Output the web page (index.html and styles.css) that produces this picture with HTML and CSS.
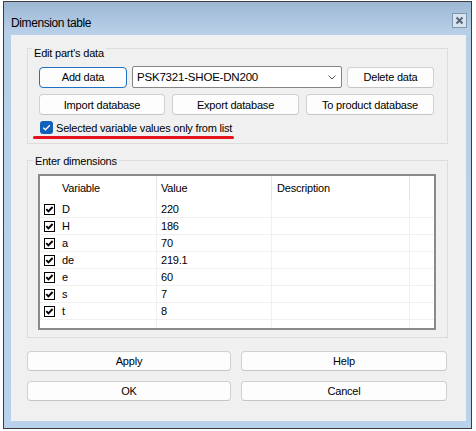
FILE: index.html
```html
<!DOCTYPE html>
<html lang="en">
<head>
    <meta charset="UTF-8">
    <title>Dimension table</title>
    <link rel="stylesheet" href="styles.css">
</head>
<body>
    <div class="window">
        <div class="titlebar">
            <span class="title">Dimension table</span>
            <span class="close-btn">
                <svg width="9" height="9" viewBox="0 0 9 9"><path d="M1.5 1.5 L7.5 7.5 M7.5 1.5 L1.5 7.5" stroke="#56667a" stroke-width="2"/></svg>
            </span>
        </div>
        <div class="client">
            <div class="group group-edit">
                <div class="group-title">Edit part's data</div>
                <div class="btn-row row-top">
                    <button class="btn btn-default w-add">Add data</button>
                    <div class="combo">
                        <span>PSK7321-SHOE-DN200</span>
                        <svg width="8" height="5" viewBox="0 0 8 5"><path d="M0.5 0.5 L4 4 L7.5 0.5" fill="none" stroke="#5a5a5a" stroke-width="1"/></svg>
                    </div>
                    <button class="btn w-delete">Delete data</button>
                </div>
                <div class="btn-row row-db">
                    <button class="btn w-import">Import database</button>
                    <button class="btn w-export">Export database</button>
                    <button class="btn w-product">To product database</button>
                </div>
                <label class="check-line">
                    <span class="check-box">
                        <svg width="13" height="13" viewBox="0 0 13 13"><path d="M3.2 6.6 L5.4 8.8 L9.8 4.2" fill="none" stroke="#fff" stroke-width="1.3"/></svg>
                    </span>
                    Selected variable values only from list
                </label>
                <div class="red-mark"></div>
            </div>

            <div class="group group-dims">
                <div class="group-title">Enter dimensions</div>
                <div class="list-view">
                    <table class="dims">
                        <colgroup>
                            <col class="c-var"><col class="c-val"><col class="c-desc"><col class="c-rest">
                        </colgroup>
                        <thead>
                            <tr><th class="h-var">Variable</th><th>Value</th><th class="h-desc">Description</th><th class="h-rest"></th></tr>
                        </thead>
                        <tbody id="rows"></tbody>
                    </table>
                </div>
            </div>

            <div class="dialog-buttons">
                <button class="btn">Apply</button>
                <button class="btn">Help</button>
                <button class="btn">OK</button>
                <button class="btn">Cancel</button>
            </div>
        </div>
    </div>

    <script>
        const dims = [
            ['D', '220'],
            ['H', '186'],
            ['a', '70'],
            ['de', '219.1'],
            ['e', '60'],
            ['s', '7'],
            ['t', '8']
        ];

        const tick = '<svg class="row-check" width="11" height="11" viewBox="0 0 11 11">' +
            '<rect x="0.5" y="0.5" width="10" height="10" fill="#fff" stroke="#000"/>' +
            '<path d="M2.3 5.2 L4.4 7.4 L8.6 3" fill="none" stroke="#000" stroke-width="1.9"/></svg>';

        const body = document.getElementById('rows');
        dims.forEach(([name, value]) => {
            const tr = document.createElement('tr');
            tr.innerHTML = `<td class="d-var">${tick}${name}</td><td class="d-val">${value}</td><td></td><td></td>`;
            body.appendChild(tr);
        });

        // empty space under the last row keeps the grid lines
        const filler = document.createElement('tr');
        filler.className = 'filler';
        filler.innerHTML = '<td></td><td></td><td></td><td></td>';
        body.appendChild(filler);
    </script>
</body>
</html>
```

FILE: styles.css
```css
body {
    margin: 0;
    background: #fff;
    font-family: "Liberation Sans", Arial, sans-serif;
    font-size: 11px;
    letter-spacing: -0.2px;
    color: #000;
}

.window {
    width: 469px;
    height: 428px;
    margin: 1px 0 0 3px;
    box-sizing: border-box;
    border: 1px solid #3c3c3c;
    background: linear-gradient(#9db7d4 0, #b8cfe8 30px, #b9d1ea 100%);
}

.titlebar {
    height: 33px;
    display: flex;
    justify-content: space-between;
    align-items: flex-start;
    padding: 0 4px 0 7px;
}
.title {
    margin-top: 14px;
    font-size: 12px;
    line-height: 14px;
    letter-spacing: -0.4px;
}
.close-btn {
    margin-top: 11px;
    width: 15px;
    height: 15px;
    box-sizing: border-box;
    border: 1px solid #8195ac;
    background: #d9e4f1;
    display: flex;
    align-items: center;
    justify-content: center;
}

.client {
    margin: 0 5px 0 7px;
    height: 386px;
    box-sizing: border-box;
    padding: 13px 0 0 16px;
    background: #f0f0f0;
}

.group {
    width: 421px;
    box-sizing: border-box;
    border: 1px solid #dcdcdc;
}
.group-title {
    width: fit-content;
    padding: 0 2px;
    line-height: 13px;
    background: #f0f0f0;
}

.group-edit {
    padding: 0 13px 4px 11px;
}
.group-edit .group-title {
    margin: -2px 0 0 -7px;
}

.btn-row {
    display: flex;
    align-items: center;
}
.row-top {
    margin-top: 6px;
    height: 22px;
    gap: 5px;
}
.row-db {
    margin-top: 6px;
    height: 21px;
    gap: 7px;
}

.btn {
    height: 21px;
    padding: 0;
    box-sizing: border-box;
    border: 1px solid #d0d0d0;
    border-bottom-color: #c4c4c4;
    border-radius: 4px;
    background: #fdfdfd;
    font: inherit;
    letter-spacing: inherit;
    color: #000;
}
.btn-default {
    border-color: #1f6fc5;
}
.w-add { width: 88px; }
.w-delete { width: 87px; }
.w-import { width: 126px; }
.w-export { width: 127px; }
.w-product { width: 128px; }

.combo {
    width: 210px;
    height: 22px;
    box-sizing: border-box;
    border: 1px solid #858585;
    border-radius: 2px;
    background: #fff;
    display: flex;
    align-items: center;
    justify-content: space-between;
    padding: 0 5px 0 4px;
    font-size: 11.5px;
}

.check-line {
    margin: 6px 0 0 1px;
    height: 13px;
    display: flex;
    align-items: center;
    gap: 3px;
}
.check-box {
    width: 13px;
    height: 13px;
    border-radius: 3px;
    background: #0f62b8;
    display: flex;
}

.red-mark {
    width: 201px;
    height: 3px;
    margin: 2px 0 0 -6px;
    border-radius: 2px;
    background: #e3141c;
}

.group-dims {
    margin-top: 16px;
    padding: 0 11px 7px 10px;
}
.group-dims .group-title {
    margin: -6px 0 0 -5px;
}

.list-view {
    margin-top: 6px;
    width: 398px;
    height: 156px;
    box-sizing: border-box;
    border: 2px solid #8a8a8a;
    background: #fff;
    overflow: hidden;
}

.dims {
    width: 394px;
    height: 152px;
    table-layout: fixed;
    border-collapse: separate;
    border-spacing: 0;
}
.c-var { width: 117px; }
.c-val { width: 115px; }
.c-desc { width: 138px; }
.c-rest { width: 24px; }

.dims th {
    height: 24px;
    padding: 0 0 0 4px;
    text-align: left;
    font-weight: normal;
    border-right: 1px solid #e5e5e5;
    border-bottom: 1px solid #fff;
}
.dims th.h-var { padding-left: 22px; }
.dims th.h-desc { padding-left: 5px; }
.dims th.h-rest { border-right: none; }

.dims td {
    padding: 0 0 0 4px;
    line-height: 16px;
    height: 16px;
    border-right: 1px solid #f0f0f0;
    border-bottom: 1px solid #f0f0f0;
    white-space: nowrap;
}
.dims td:last-child { border-right: none; }
.dims td.d-var { padding-left: 4px; }
.dims .filler td {
    height: auto;
    border-bottom: none;
}

.row-check {
    display: inline-block;
    vertical-align: top;
    margin: 3px 7px 0 0;
}

.dialog-buttons {
    margin-top: 13px;
    display: grid;
    grid-template-columns: 204px 206px;
    gap: 10px;
}
.dialog-buttons .btn {
    height: 20px;
}
```
